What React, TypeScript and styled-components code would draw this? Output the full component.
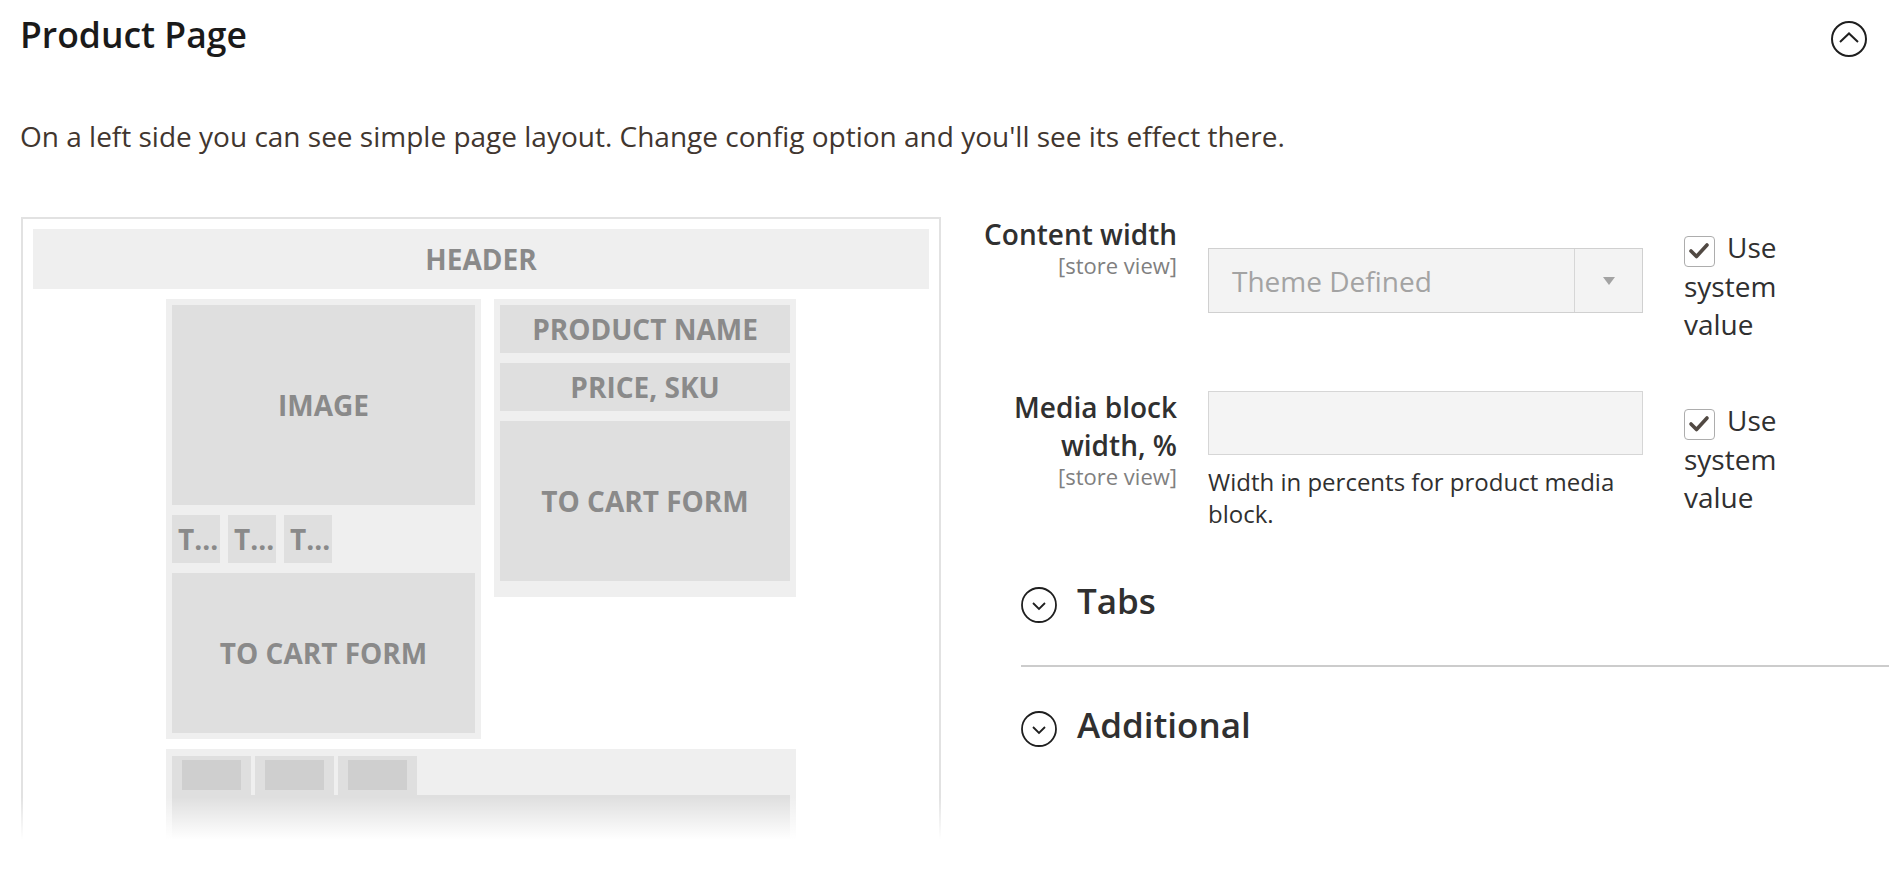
import React from 'react';
import styled, { createGlobalStyle } from 'styled-components';

const GlobalStyle = createGlobalStyle`
    html, body {
        margin: 0;
        padding: 0;
        background: #ffffff;
    }
    body {
        font-family: "Open Sans", "Noto Sans", "Liberation Sans", sans-serif;
        color: #303030;
    }
    * {
        box-sizing: border-box;
    }
`

const Page = styled.div`
    padding: 10px 0 0 20px;
    height: 891px;
    overflow: hidden;
`

const TitleRow = styled.div`
    display: flex;
    justify-content: space-between;
    align-items: flex-start;
    padding-right: 22px;
`

const Title = styled.h1`
    margin: 0;
    font-size: 35.5px;
    font-weight: 600;
    line-height: 49px;
    color: #1a1a1a;
`

const CollapseButton = styled.button`
    margin-top: 11px;
    padding: 0;
    border: none;
    background: none;
    width: 36px;
    height: 36px;
    display: block;
`

const Description = styled.p`
    margin: 58px 0 0;
    font-size: 28px;
    line-height: 38px;
    color: #41362f;
`

const Main = styled.div`
    display: flex;
    align-items: flex-start;
    margin-top: 60px;
`

// Layout preview (left side)
const Preview = styled.div`
    position: relative;
    flex: 0 0 920px;
    height: 633px;
    margin: 2px 0 0 1px;
    padding: 10px;
    border: 2px solid #e2e2e2;
    border-bottom: none;
    display: flex;
    flex-direction: column;
    gap: 10px;
    &::after {
        content: '';
        position: absolute;
        left: -2px;
        right: -2px;
        bottom: 0;
        height: 53px;
        background: linear-gradient(to bottom, rgba(255, 255, 255, 0) 0%, #ffffff 80%);
    }
`

const PreviewHeader = styled.div`
    height: 60px;
    flex: 0 0 60px;
    background: #efefef;
    display: flex;
    align-items: center;
    justify-content: center;
    font-size: 28px;
    font-weight: 700;
    color: #8a8a8a;
`

const PreviewBody = styled.div`
    display: grid;
    grid-template-columns: 315px 302px;
    column-gap: 13px;
    row-gap: 10px;
    justify-content: center;
    align-items: start;
`

const PreviewColumn = styled.div<{ $bottom: number }>`
    background: #efefef;
    padding: 6px 6px ${p => p.$bottom}px;
    display: flex;
    flex-direction: column;
    gap: 10px;
`

const Block = styled.div<{ $height: number }>`
    height: ${p => p.$height}px;
    background: #dfdfdf;
    display: flex;
    align-items: center;
    justify-content: center;
    font-size: 28px;
    font-weight: 700;
    color: #8a8a8a;
    white-space: nowrap;
`

const ThumbRow = styled.div`
    display: flex;
    gap: 8px;
`

const Thumb = styled.div`
    width: 48px;
    height: 48px;
    background: #dfdfdf;
    padding-left: 6px;
    font-size: 28px;
    font-weight: 700;
    line-height: 48px;
    color: #8a8a8a;
    white-space: nowrap;
    overflow: hidden;
`

const TabsBlock = styled.div`
    grid-column: 1 / -1;
    background: #efefef;
    padding: 7px 6px 0;
`

const TabRow = styled.div`
    display: flex;
    gap: 4px;
`

const Tab = styled.div`
    width: 79px;
    height: 39px;
    background: #dfdfdf;
    padding: 4px 10px 0;
`

const TabLabel = styled.div`
    height: 30px;
    background: #cfcfcf;
`

const TabContent = styled.div`
    height: 54px;
    background: #dfdfdf;
`

// Config form (right side)
const FormColumn = styled.div`
    flex: 1;
    margin-left: 36px;
`

const FieldList = styled.div`
    display: flex;
    flex-direction: column;
    gap: 45px;
`

const Field = styled.div`
    display: grid;
    grid-template-columns: 200px 435px 120px;
    column-gap: 31px;
    align-items: start;
`

const LabelCell = styled.div`
    text-align: right;
`

const LabelText = styled.div`
    font-size: 28px;
    font-weight: 600;
    line-height: 38px;
    color: #303030;
`

const Scope = styled.div`
    font-size: 22px;
    line-height: 24px;
    color: #808080;
`

const ControlCell = styled.div<{ $offset: number }>`
    margin-top: ${p => p.$offset}px;
`

const Select = styled.div`
    height: 65px;
    display: flex;
    background: #f3f3f3;
    border: 1px solid #d0d0d0;
`

const SelectValue = styled.div`
    flex: 1;
    display: flex;
    align-items: center;
    padding-left: 23px;
    font-size: 28px;
    color: #a3a3a3;
`

const SelectArrow = styled.div`
    width: 68px;
    border-left: 1px solid #d6d6d6;
    display: flex;
    align-items: center;
    justify-content: center;
    &::before {
        content: '';
        border-left: 6.5px solid transparent;
        border-right: 6.5px solid transparent;
        border-top: 8px solid #a3a3a3;
    }
`

const Input = styled.input`
    display: block;
    width: 100%;
    height: 64px;
    margin: 0;
    background: #f4f4f4;
    border: 1px solid #d6d6d6;
    border-radius: 0;
`

const Note = styled.div`
    margin-top: 11px;
    font-size: 24px;
    line-height: 32px;
    color: #303030;
`

const UseDefault = styled.label`
    margin-left: 10px;
    padding-top: 13px;
    font-size: 28px;
    line-height: 38px;
    color: #303030;
`

const CheckBox = styled.span`
    display: inline-block;
    width: 31px;
    height: 31px;
    margin-right: 12px;
    vertical-align: -9px;
    border: 1.5px solid #adadad;
    border-radius: 4px;
    background: #ffffff;
    svg {
        display: block;
    }
`

const Sections = styled.div`
    margin: 13px 0 0 44px;
`

const Section = styled.div<{ $divider: boolean }>`
    display: flex;
    align-items: center;
    gap: 20px;
    padding: 35px 0 41px;
    border-bottom: ${p => (p.$divider ? '2px solid #cccccc' : 'none')};
`

const SectionIcon = styled.span`
    display: block;
    width: 36px;
    height: 36px;
    margin-top: 8px;
`

const SectionTitle = styled.span`
    font-size: 35px;
    font-weight: 600;
    line-height: 46px;
    color: #303030;
`

const CheckMark: React.FC = () => (
    <svg width="28" height="28" viewBox="0 0 28 28">
        <polyline points="6,14 11.5,19.5 22,8" fill="none" stroke="#514943" strokeWidth="3.6" strokeLinecap="round" strokeLinejoin="round" />
    </svg>
)

const CircleChevron: React.FC<{ up?: boolean, stroke?: number }> = ({ up, stroke = 1.8 }) => (
    <svg width="36" height="36" viewBox="0 0 36 36">
        <circle cx="18" cy="18" r="17" fill="none" stroke="#1f1f1f" strokeWidth={stroke} />
        {up
            ? <polyline points="9,21 18,12.5 27,21" fill="none" stroke="#1f1f1f" strokeWidth="2" />
            : <polyline points="12,16 18,22 24,16" fill="none" stroke="#1f1f1f" strokeWidth="1.8" />}
    </svg>
)

const UseSystemValue: React.FC = () => (
    <UseDefault>
        <CheckBox><CheckMark /></CheckBox>Use system value
    </UseDefault>
)

const App: React.FC = () => {
    const sections = ['Tabs', 'Additional'];

    return (
        <Page>
            <GlobalStyle />
            <TitleRow>
                <Title>Product Page</Title>
                <CollapseButton aria-label="Collapse">
                    <CircleChevron up stroke={2} />
                </CollapseButton>
            </TitleRow>
            <Description>
                On a left side you can see simple page layout. Change config option and you'll see its effect there.
            </Description>
            <Main>
                <Preview>
                    <PreviewHeader>HEADER</PreviewHeader>
                    <PreviewBody>
                        <PreviewColumn $bottom={6}>
                            <Block $height={200}>IMAGE</Block>
                            <ThumbRow>
                                <Thumb>T...</Thumb>
                                <Thumb>T...</Thumb>
                                <Thumb>T...</Thumb>
                            </ThumbRow>
                            <Block $height={160}>TO CART FORM</Block>
                        </PreviewColumn>
                        <PreviewColumn $bottom={16}>
                            <Block $height={48}>PRODUCT NAME</Block>
                            <Block $height={48}>PRICE, SKU</Block>
                            <Block $height={160}>TO CART FORM</Block>
                        </PreviewColumn>
                        <TabsBlock>
                            <TabRow>
                                <Tab><TabLabel /></Tab>
                                <Tab><TabLabel /></Tab>
                                <Tab><TabLabel /></Tab>
                            </TabRow>
                            <TabContent />
                        </TabsBlock>
                    </PreviewBody>
                </Preview>
                <FormColumn>
                    <FieldList>
                        <Field>
                            <LabelCell>
                                <LabelText>Content width</LabelText>
                                <Scope>[store view]</Scope>
                            </LabelCell>
                            <ControlCell $offset={33}>
                                <Select>
                                    <SelectValue>Theme Defined</SelectValue>
                                    <SelectArrow />
                                </Select>
                            </ControlCell>
                            <UseSystemValue />
                        </Field>
                        <Field>
                            <LabelCell>
                                <LabelText>Media block width, %</LabelText>
                                <Scope>[store view]</Scope>
                            </LabelCell>
                            <ControlCell $offset={3}>
                                <Input type="text" disabled />
                                <Note>Width in percents for product media block.</Note>
                            </ControlCell>
                            <UseSystemValue />
                        </Field>
                    </FieldList>
                    <Sections>
                        {sections.map((name, i) => (
                            <Section key={name} $divider={i < sections.length - 1}>
                                <SectionIcon><CircleChevron /></SectionIcon>
                                <SectionTitle>{name}</SectionTitle>
                            </Section>
                        ))}
                    </Sections>
                </FormColumn>
            </Main>
        </Page>
    )
}

export default App;
